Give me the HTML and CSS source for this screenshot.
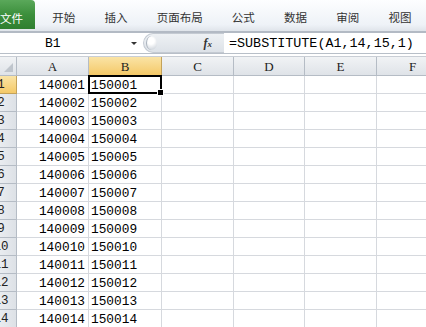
FILE: index.html
```html
<!DOCTYPE html>
<html lang="zh">
<head>
    <meta charset="UTF-8">
    <title>SUBSTITUTE</title>
    <link rel="stylesheet" href="styles.css">
</head>
<body>
<div class="ribbon">
    <div class="tab file">文件</div>
    <div class="tab">开始</div>
    <div class="tab">插入</div>
    <div class="tab">页面布局</div>
    <div class="tab">公式</div>
    <div class="tab">数据</div>
    <div class="tab">审阅</div>
    <div class="tab">视图</div>
</div>

<div class="formula-bar">
    <div class="name-box">
        <span class="name">B1</span>
        <span class="arrow"></span>
    </div>
    <div class="fx-area">
        <span class="knob"></span>
        <span class="fx"><i>f</i><i class="x">x</i></span>
    </div>
    <div class="formula">=SUBSTITUTE(A1,14,15,1)</div>
</div>

<div class="sheet" id="sheet">
    <div class="corner"></div>
    <div class="ch">A</div>
    <div class="ch active">B</div>
    <div class="ch">C</div>
    <div class="ch">D</div>
    <div class="ch">E</div>
    <div class="ch">F</div>
</div>

<script>
    let sheet = document.getElementById('sheet');
    let str = '';
    for (let i = 1; i <= 14; i++) {
        let n = String(i).padStart(2, '0');
        str += `
            <div class="rh ${i === 1 ? 'active' : ''}"><span>${i}</span></div>
            <div class="cell num">1400${n}</div>
            <div class="cell ${i === 1 ? 'selected' : ''}">1500${n}</div>
            <div class="cell"></div>
            <div class="cell"></div>
            <div class="cell"></div>
            <div class="cell"></div>`;
    }
    sheet.innerHTML += str;
</script>
</body>
</html>
```

FILE: styles.css
```css
body {
    margin: 0;
    width: 426px;
    height: 327px;
    overflow: hidden;
    background: #fff;
    font-family: "Liberation Mono", monospace;
}

.ribbon {
    display: flex;
    height: 31px;
    background: linear-gradient(#fdfeff, #eef2f7 80%, #dfe4ea);
    border-bottom: 2px solid #b3bac4;
    font-family: "Noto Sans CJK SC", sans-serif;
    font-size: 11.5px;
    color: #333;
}

.tab {
    padding: 0 14.6px;
    line-height: 34px;
    white-space: nowrap;
}

.tab.file {
    width: 40px;
    height: 29px;
    box-sizing: border-box;
    padding: 0;
    margin-right: 2.5px;
    line-height: 36px;
    color: #fff;
    background: linear-gradient(#5aa85a, #3c8f3c 50%, #2f7f30);
    border-radius: 0 4px 0 0;
}

.formula-bar {
    display: flex;
    height: 20px;
    border-bottom: 1px solid #b8bfc8;
    background: #fff;
}

.name-box {
    width: 143px;
    position: relative;
    font-size: 13px;
    line-height: 21px;
}

.name-box .name {
    padding-left: 45px;
}

.name-box .arrow {
    position: absolute;
    left: 131px;
    top: 9px;
    border-left: 3px solid transparent;
    border-right: 3px solid transparent;
    border-top: 3px solid #333;
}

.fx-area {
    width: 81px;
    display: flex;
    align-items: center;
    justify-content: space-between;
    background: linear-gradient(#eef1f4, #dde2e8);
    border: 1px solid #c4cad2;
    border-right: none;
    border-radius: 10px 0 0 10px;
    box-sizing: border-box;
}

.knob {
    width: 10px;
    height: 14px;
    margin-left: 2px;
    border-radius: 50%;
    background: radial-gradient(circle at 40% 35%, #fff 30%, #d6dbe1 75%);
    border-left: 1px solid #aab2bc;
}

.fx {
    margin-right: 12px;
    font-family: "Liberation Serif", serif;
    font-weight: bold;
    font-size: 12px;
    color: #333;
}

.fx .x {
    font-size: 9px;
}

.formula {
    flex: 1;
    padding-left: 5px;
    font-size: 13.4px;
    line-height: 21px;
    white-space: nowrap;
}

.sheet {
    margin-top: 2px;
    display: grid;
    grid-template-columns: 17px 72px 73px 72px 71px 72px 72px;
    grid-template-rows: 19px;
    grid-auto-rows: 18px;
    width: 449px;
    border-top: 1px solid #c9ced5;
}

.corner,
.ch,
.rh {
    box-sizing: border-box;
    background: linear-gradient(#f1f3f5, #dfe3e8);
    border-right: 1px solid #b5bcc5;
    border-bottom: 1px solid #b5bcc5;
    color: #222;
}

.corner {
    position: relative;
}

.corner::after {
    content: "";
    position: absolute;
    right: 3px;
    bottom: 3px;
    border-left: 9px solid transparent;
    border-bottom: 9px solid #bfc5cc;
}

.ch {
    text-align: center;
    font-family: "Liberation Serif", serif;
    font-size: 13px;
    line-height: 20px;
}

.rh {
    overflow: hidden;
    font-size: 12.5px;
    line-height: 19px;
    background: linear-gradient(90deg, #e9ecf0, #dde1e6);
}

.rh span {
    display: block;
    width: 34px;
    margin-left: -16px;
    text-align: center;
}

.ch.active,
.rh.active {
    background: linear-gradient(#fae4a6, #f4c968);
    border-color: #c3a25a;
}

.cell {
    box-sizing: border-box;
    border-right: 1px solid #d6d9de;
    border-bottom: 1px solid #d6d9de;
    padding: 0 2px;
    font-size: 12.8px;
    line-height: 20px;
    white-space: nowrap;
}

.cell.num {
    text-align: right;
    padding-right: 3px;
}

.cell.selected {
    position: relative;
}

.cell.selected::after {
    content: "";
    position: absolute;
    left: -1px;
    top: -1px;
    right: -1px;
    bottom: -1px;
    border: 2px solid #000;
}

.cell.selected::before {
    content: "";
    position: absolute;
    right: -3px;
    bottom: -3px;
    width: 5px;
    height: 5px;
    background: #000;
    border: 1px solid #fff;
    z-index: 1;
}
```
